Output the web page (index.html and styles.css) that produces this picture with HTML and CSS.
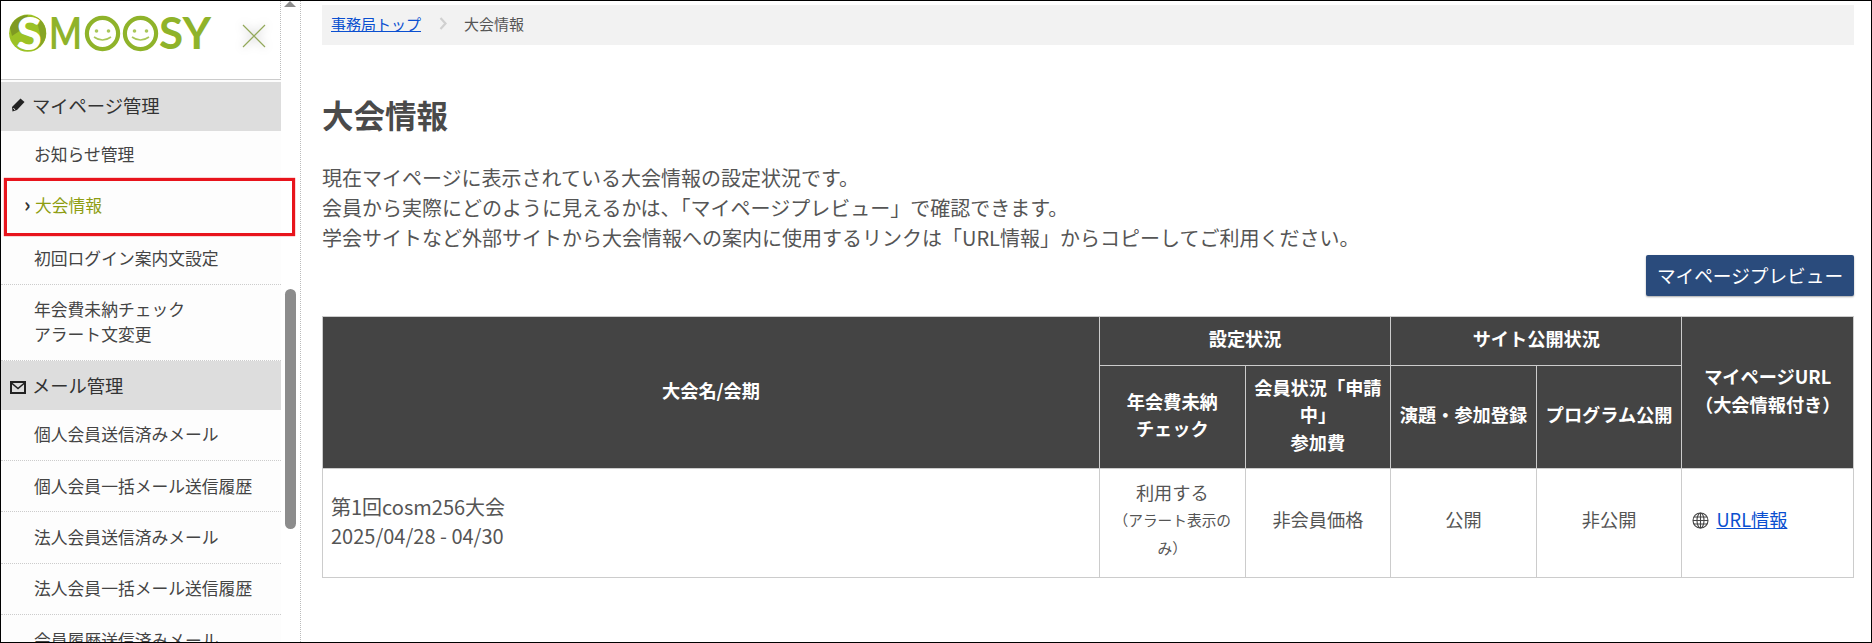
FILE: index.html
```html
<!DOCTYPE html>
<html lang="ja">
<head>
<meta charset="utf-8">
<title>大会情報</title>
<link rel="stylesheet" href="styles.css">
</head>
<body>
<div class="frame">
  <aside class="sidebar">
    <div class="nav-col">
      <header class="brand">
        <svg class="logo" width="212" height="60" viewBox="0 0 212 60">
          <circle cx="27.7" cy="33.2" r="18.6" fill="#9cc225"/>
          <path d="M10 28 C13 20 20 15 28 15 L21 30 L12 36 Z" fill="#7f9a22"/>
          <path d="M36 17 C43 20 46 27 46 33 C46 42 40 48 34 50 L40 34 Z" fill="#86a524"/>
          <text class="logo-s" x="16.500" y="49.500" font-size="46">S</text>
          <text class="logo-t" x="49" y="49" font-size="43" textLength="33" lengthAdjust="spacingAndGlyphs">M</text>
          <g class="face">
            <circle cx="102.5" cy="33.5" r="15.6"/>
            <circle cx="140.5" cy="33.5" r="15.6"/>
          </g>
          <g class="smile">
            <circle cx="96.500" cy="31" r="1.8"/><circle cx="108.500" cy="31" r="1.8"/>
            <circle cx="134.500" cy="31" r="1.8"/><circle cx="146.500" cy="31" r="1.8"/>
            <path d="M94 37 Q102.500 43 111 37"/><path d="M132 37 Q140.500 43 149 37"/>
          </g>
          <text class="logo-t" x="159" y="49" font-size="43" textLength="52" lengthAdjust="spacingAndGlyphs">SY</text>
        </svg>
        <svg class="close" width="26" height="26" viewBox="0 0 26 26">
          <path d="M2 2 L24 24 M24 2 L2 24"/>
        </svg>
      </header>
      <nav class="menu">
        <h2 class="menu-head">
          <svg class="menu-icon" width="16" height="16" viewBox="0 0 16 16"><path d="M10.500 1.500 L14.500 5 L7 13 L2.500 14.500 L2 10 Z" fill="#222"/><path d="M3.400 11 L5 13" stroke="#ddd" stroke-width="1"/></svg>
          マイページ管理
        </h2>
        <a class="menu-item is-first">お知らせ管理</a>
        <a class="menu-item is-first is-active"><span class="chev">›</span>大会情報</a>
        <a class="menu-item">初回ログイン案内文設定</a>
        <a class="menu-item">年会費未納チェック<br>アラート文変更</a>
        <h2 class="menu-head">
          <svg class="menu-icon mail" width="16" height="13" viewBox="0 0 16 13"><rect x="1" y="1" width="14" height="11" fill="none" stroke="#222" stroke-width="2"/><path d="M1.500 2 L8 7.500 L14.500 2" fill="none" stroke="#222" stroke-width="1.600"/></svg>
          メール管理
        </h2>
        <a class="menu-item">個人会員送信済みメール</a>
        <a class="menu-item">個人会員一括メール送信履歴</a>
        <a class="menu-item">法人会員送信済みメール</a>
        <a class="menu-item">法人会員一括メール送信履歴</a>
        <a class="menu-item">会員履歴送信済みメール</a>
      </nav>
    </div>
    <div class="rail">
      <span class="rail-arrow"></span>
      <span class="rail-thumb"></span>
    </div>
    <div class="highlight"></div>
  </aside>
  <main class="main">
    <div class="crumbs">
      <a class="link" href="#">事務局トップ</a>
      <svg class="crumb-sep" width="8" height="13" viewBox="0 0 8 13"><path d="M1.500 1 L6.500 6.500 L1.500 12" fill="none" stroke="#d0d0d0" stroke-width="2.200"/></svg>
      <span>大会情報</span>
    </div>
    <h1 class="title">大会情報</h1>
    <p class="lead">現在マイページに表示されている大会情報の設定状況です。<br>会員から実際にどのように見えるかは、「マイページプレビュー」で確認できます。<br>学会サイトなど外部サイトから大会情報への案内に使用するリンクは「URL情報」からコピーしてご利用ください。</p>
    <div class="actions"><a class="btn">マイページプレビュー</a></div>
    <table class="info">
      <colgroup>
        <col class="c-name"><col class="c-a"><col class="c-a"><col class="c-a"><col class="c-a"><col>
      </colgroup>
      <thead>
        <tr class="r1">
          <th rowspan="2">大会名/会期</th>
          <th colspan="2">設定状況</th>
          <th colspan="2">サイト公開状況</th>
          <th rowspan="2">マイページURL<br>（大会情報付き）</th>
        </tr>
        <tr class="r2">
          <th>年会費未納<br>チェック</th>
          <th>会員状況「申請中」<br>参加費</th>
          <th>演題・参加登録</th>
          <th>プログラム公開</th>
        </tr>
      </thead>
      <tbody>
        <tr class="r3">
          <td class="name"><div class="conf">第1回cosm256大会</div><div class="date">2025/04/28 - 04/30</div></td>
          <td><div>利用する</div><div class="note">（アラート表示のみ）</div></td>
          <td>非会員価格</td>
          <td>公開</td>
          <td>非公開</td>
          <td class="url">
            <svg class="globe" width="17" height="17" viewBox="0 0 17 17"><g fill="none" stroke="#444" stroke-width="1.100"><circle cx="8.500" cy="8.500" r="7.500"/><ellipse cx="8.500" cy="8.500" rx="3.500" ry="7.500"/><path d="M8.500 1 V16 M1 8.500 H16 M2 5 H15 M2 12 H15"/></g></svg>
            <a class="link" href="#">URL情報</a>
          </td>
        </tr>
      </tbody>
    </table>
  </main>
</div>
</body>
</html>
```

FILE: styles.css
```css
* { box-sizing: border-box; }
html, body { margin: 0; padding: 0; height: 100%; }
body {
  font-family: "Noto Sans CJK JP", "Liberation Sans", sans-serif;
  color: #555;
  background: #fff;
  overflow: hidden;
}
.frame {
  width: 1872px;
  height: 643px;
  border: 1px solid #000;
  display: flex;
  overflow: hidden;
}
.sidebar {
  width: 300px;
  flex: none;
  display: flex;
  position: relative;
  border-right: 1px dotted #bbb;
  margin-top: -1px;
  padding-top: 1px;
}
.nav-col {
  width: 280px;
  flex: none;
  background: #fdfdfd;
}
.brand {
  height: 79px;
  background: #fff;
  border-right: 1px dotted #bbb;
  border-bottom: 1px solid #ccc;
  display: flex;
  align-items: flex-start;
}
.logo { display: block; margin: -1px 0 0 -1px; flex: none; }
.logo-t { font-family: "Lato", "Liberation Sans", sans-serif; font-weight: 700; fill: #8fb32a; }
.logo-s { font-family: "Lato", "Liberation Sans", sans-serif; font-weight: 900; fill: #fff; }
.face circle { fill: #fff; stroke: #8fb32a; stroke-width: 4.2; }
.smile circle { fill: #a9c75a; }
.smile path { fill: none; stroke: #a9c75a; stroke-width: 1.6; }
.close {
  margin: 22px 0 0 29px;
  flex: none;
  filter: drop-shadow(0 0 5px rgba(0, 0, 0, .35));
}
.close path { fill: none; stroke: #93a85a; stroke-width: 1.2; }
.menu { padding-top: 2px; }
.menu-head {
  margin: 0;
  height: 48.6px;
  background: #ddd;
  display: flex;
  align-items: center;
  gap: 6px;
  padding: 0 0 2px 9px;
  font-size: 18.3px;
  font-weight: 400;
  color: #333;
}
.menu-icon { flex: none; }
.menu-icon.mail { margin-top: 6px; }
.menu-item {
  display: block;
  padding: 12.5px 0 12.5px 33px;
  line-height: 25.33px;
  font-size: 16.8px;
  color: #444;
  border-bottom: 1px dotted #ccc;
}
.menu-item.is-first { padding-top: 11.5px; padding-bottom: 13.5px; border-bottom-color: transparent; }
.menu-item.is-active { color: #8e9d12; padding-left: 23px; }
.chev { display: inline-block; width: 11px; color: #333; font-size: 20px; font-weight: 700; line-height: 20px; }
.rail { width: 18px; flex: none; display: flex; flex-direction: column; align-items: center; }
.rail-arrow {
  width: 0; height: 0;
  border-left: 6px solid transparent;
  border-right: 6px solid transparent;
  border-bottom: 6px solid #8c8c8c;
}
.rail-thumb {
  width: 11px;
  height: 240px;
  margin-top: 282px;
  background: #8c8c8c;
  border-radius: 6px;
}
.highlight {
  position: absolute;
  left: 3px;
  top: 178px;
  width: 291px;
  height: 58px;
  border: 3px solid #e8141c;
  box-shadow: 0 0 1px #e8141c;
  pointer-events: none;
}
.main {
  flex: 1;
  min-width: 0;
  padding: 4px 17px 0 21px;
}
.crumbs {
  height: 40px;
  background: #f2f2f2;
  display: flex;
  align-items: center;
  padding: 0 0 3px 9px;
  font-size: 15px;
  color: #555;
}
.crumb-sep { margin: 0 17px 0 18px; flex: none; }
.link { color: #0a4fd0; text-decoration: underline; }
.title {
  margin: 45px 0 0;
  font-size: 31.5px;
  line-height: 48px;
  font-weight: 700;
  color: #4a4a4a;
}
.lead {
  margin: 25px 0 0;
  font-size: 20px;
  line-height: 30px;
}
.actions { display: flex; justify-content: flex-end; margin-top: 2px; }
.btn {
  height: 41px;
  width: 208px;
  display: flex;
  align-items: center;
  justify-content: center;
  padding-bottom: 3px;
  background: #2a4b7c;
  color: #fff;
  font-size: 18.67px;
  border-radius: 2px;
  box-shadow: 0 1px 2px rgba(0, 0, 0, .35);
}
.info {
  width: 1532px;
  margin-top: 20px;
  border-collapse: collapse;
  table-layout: fixed;
}
.c-name { width: 777px; }
.c-a { width: 145.600px; }
.info th, .info td {
  border: 1px solid #ccc;
  text-align: center;
  padding: 0 8px 4px;
}
.info th {
  background: #444;
  color: #fff;
  font-size: 18.2px;
  line-height: 27.500px;
  font-weight: 700;
}
.info td { font-size: 18.2px; line-height: 27.500px; color: #555; padding-bottom: 6px; }
.r1 { height: 49px; }
.r2 { height: 103px; }
.r3 { height: 109px; }
.info td.name { text-align: left; }
.conf { font-size: 20px; line-height: 30px; }
.date { font-size: 20px; line-height: 27px; }
.note { font-size: 14.700px; line-height: 27.500px; }
.info td.url { text-align: left; padding-left: 10px; white-space: nowrap; }
.globe { vertical-align: -2px; margin-right: 3px; }
```
